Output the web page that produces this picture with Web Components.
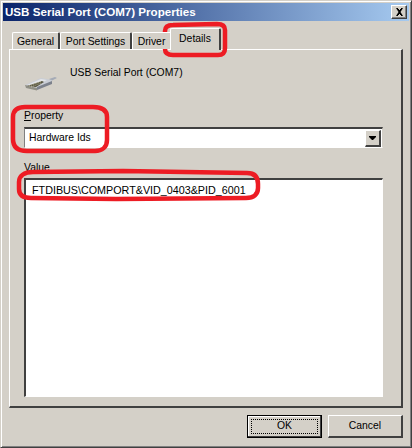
<!DOCTYPE html>
<html>
<head>
<meta charset="utf-8">
<title>USB Serial Port (COM7) Properties</title>
<style>
html, body { margin: 0; padding: 0; background: #d4d0c8; }
body { font: 10.4px/12px "Liberation Sans", Arial, sans-serif; color: #000; }
</style>
</head>
<body>

<template id="win-dialog-tpl">
<style>
:host {
    display: flex;
    flex-direction: column;
    position: relative;
    box-sizing: border-box;
    width: 412px;
    height: 448px;
    overflow: hidden;
    background: #d4d0c8;
    border: 1px solid;
    border-color: #d4d0c8 #404040 #404040 #d4d0c8;
    box-shadow: inset 1px 1px 0 #fff, inset -1px -1px 0 #808080;
    padding: 2px 2px 3px 2px;
}
.title {
    display: flex;
    align-items: center;
    justify-content: space-between;
    flex: none;
    height: 18px;
    padding: 0 2px;
    background: linear-gradient(to right, #0a246a, #a6caf0);
    color: #fff;
    font-weight: bold;
    font-size: 11.6px;
    white-space: nowrap;
}
.close {
    display: block;
    box-sizing: border-box;
    width: 16px;
    height: 14px;
    background: #d4d0c8;
    border: 1px solid;
    border-color: #fff #404040 #404040 #fff;
    box-shadow: inset -1px -1px 0 #808080;
}
.close svg { display: block; margin: 2px 0 0 3px; }
.content { flex: 1; display: flex; flex-direction: column; padding: 7px 6px 0; min-height: 0; }
.buttons { flex: none; display: flex; justify-content: flex-end; gap: 6px; padding: 7px 0 6px; }
</style>
<div class="title"><span>USB Serial Port (COM7) Properties</span>
<span class="close"><svg width="9" height="8" viewBox="0 0 9 8"><path d="M1 0h2v1h1v1h1V1h1V0h2L5.500 4 8 8H6V7H5V6H4v1H3v1H1l2.500-4z" fill="#000"/></svg></span></div>
<div class="content">
  <slot name="tabs"></slot>
  <slot></slot>
  <div class="buttons"><slot name="buttons"></slot></div>
</div>
<slot name="overlay"></slot>
</template>

<template id="win-tabs-tpl">
<style>
:host { display: flex; align-items: flex-start; height: 22px; padding-left: 3px; flex: none; position: relative; z-index: 1; margin-bottom: -1px; }
</style>
<slot></slot>
</template>

<template id="win-tab-tpl">
<style>
:host {
    display: block;
    box-sizing: border-box;
    flex: none;
    width: var(--w);
    height: 17px;
    margin-top: 4px;
    padding-top: 3px;
    text-align: center;
    background: #d4d0c8;
    border-style: solid;
    border-width: 1px 2px 0 1px;
    border-color: #fff #404040 #fff #fff;
    border-radius: 2px 2px 0 0;
    white-space: nowrap;
}
:host([active]) {
    height: 22px;
    margin: 0 0 0 -2px;
    padding-top: 4px;
    position: relative;
    z-index: 1;
}
</style>
<slot></slot>
</template>

<template id="win-panel-tpl">
<style>
:host {
    display: flex;
    flex-direction: column;
    flex: 1;
    min-height: 0;
    box-sizing: border-box;
    border-style: solid;
    border-width: 1px 2px 2px 1px;
    border-color: #fff #404040 #404040 #fff;
    padding: 15px 18px 9px 14px;
}
.head { display: flex; height: 44px; flex: none; }
.icon { width: 46px; flex: none; padding-top: 11px; box-sizing: border-box; }
.name { padding-top: 2px; }
</style>
<div class="head">
  <div class="icon"><slot name="icon"></slot></div>
  <div class="name"><slot name="name"></slot></div>
</div>
<slot></slot>
</template>

<template id="win-combo-tpl">
<style>
:host {
    display: block;
    flex: none;
    box-sizing: border-box;
    height: 21px;
    margin-bottom: 13px;
    background: #fff;
    border-style: solid;
    border-width: 2px 1px 1px 1px;
    border-color: #404040 #d4d0c8 #fff #808080;
}
.row { display: flex; height: 100%; align-items: center; justify-content: space-between; }
.text { padding-left: 4px; }
.drop {
    box-sizing: border-box;
    width: 16px;
    height: 17px;
    margin-right: 1px;
    background: #d4d0c8;
    border-style: solid;
    border-width: 1px 2px 2px 1px;
    border-color: #fff #404040 #404040 #fff;
    display: flex; align-items: center; justify-content: center;
}
</style>
<div class="row"><span class="text"><slot></slot></span>
<span class="drop"><svg width="7" height="4" viewBox="0 0 7 4"><path d="M0 0h7v1L4 4H3L0 1z" fill="#000"/></svg></span></div>
</template>

<template id="win-label-tpl">
<style>
:host { display: block; flex: none; height: 13px; line-height: 13px; margin-bottom: var(--gap, 5px); }
</style>
<slot></slot>
</template>

<template id="win-listbox-tpl">
<style>
:host {
    display: block;
    flex: 1;
    min-height: 0;
    box-sizing: border-box;
    background: #fff;
    border-style: solid;
    border-width: 2px 1px 1px 2px;
    border-color: #404040 #fff #fff #404040;
    padding: 4px 6px;
    font-size: 10.75px;
}
</style>
<slot></slot>
</template>

<template id="win-button-tpl">
<style>
:host {
    display: block;
    box-sizing: border-box;
    width: 75px;
    height: 23px;
    background: #d4d0c8;
    border-style: solid;
    border-width: 1px 2px 2px 1px;
    border-color: #fff #404040 #404040 #fff;
    text-align: center;
    line-height: 20px;
}
:host([default]) {
    border: 1px solid #000;
    box-shadow: inset -1px -1px 0 #404040, inset 1px 1px 0 #fff;
    padding: 3px;
    line-height: 14px;
}
.focus { display: block; height: 100%; box-sizing: border-box; }
:host([default]) .focus { outline: 1px dotted #000; outline-offset: -1px; }
</style>
<span class="focus"><slot></slot></span>
</template>

<win-dialog>
  <win-tabs slot="tabs">
    <win-tab style="--w:48px">General</win-tab>
    <win-tab style="--w:72px">Port Settings</win-tab>
    <win-tab style="--w:40px">Driver</win-tab>
    <win-tab style="--w:51px" active>Details</win-tab>
  </win-tabs>
  <win-panel>
    <svg slot="icon" width="33" height="15" viewBox="0 0 33 15" style="display:block">
      <path d="M25 3l6-2 2 1-6 3z" fill="#a4aab6"/>
      <path d="M1 9L17 2l11 2-1 2-14 6z" fill="#c9cdd5"/>
      <path d="M3 9l14-6 6 1-14 7z" fill="#e2e4e8"/>
      <path d="M13 11l15-6 0 3-15 6z" fill="#7c818c"/>
      <path d="M1 9l12 3v2.500L2 12z" fill="#8f8f86"/>
      <path d="M3 10l15-5 2 1-8 5z" fill="#55533f"/>
      <path d="M5 10l12-4.500M7 11l10-4" stroke="#dcd9b8" stroke-width=".7" stroke-dasharray="1 1"/>
    </svg>
    <span slot="name">USB Serial Port (COM7)</span>
    <win-label><u>P</u>roperty</win-label>
    <win-combo>Hardware Ids</win-combo>
    <win-label style="--gap:4px">Value</win-label>
    <win-listbox>FTDIBUS\COMPORT&amp;VID_0403&amp;PID_6001</win-listbox>
  </win-panel>
  <win-button slot="buttons" default>OK</win-button>
  <win-button slot="buttons">Cancel</win-button>
  <svg slot="overlay" width="412" height="448" viewBox="0 0 412 448" style="position:absolute;left:-1px;top:-1px;pointer-events:none" fill="none" stroke="#ed1c24" stroke-width="4.500">
    <path d="M165 31c0-4 3-6 8-6l44-1c5 0 8 2 8 6v18c0 5-2 7-7 7l-45 0c-5 0-8-2-8-6z"/>
    <path d="M13 117c0-7 5-10 12-10h68c9 0 14 3 14 10v23c0 7-5 11-12 11l-68 0c-9 0-14-4-14-12z"/>
    <path d="M19 182c0-6 5-10 14-10l90-1 124 2c8 0 11 4 11 11v4c0 6-4 10-12 10l-130 1-85-1c-8 0-12-3-12-9z"/>
  </svg>
</win-dialog>

<script>
    function defineFrom(tag) {
        const tpl = document.getElementById(tag + "-tpl");
        customElements.define(tag, class extends HTMLElement {
            constructor() {
                super();
                this.attachShadow({ mode: "open" }).appendChild(tpl.content.cloneNode(true));
            }
        });
    }

    ["win-dialog", "win-tabs", "win-tab", "win-panel", "win-combo", "win-label", "win-listbox", "win-button"].forEach(defineFrom);
</script>
</body>
</html>
